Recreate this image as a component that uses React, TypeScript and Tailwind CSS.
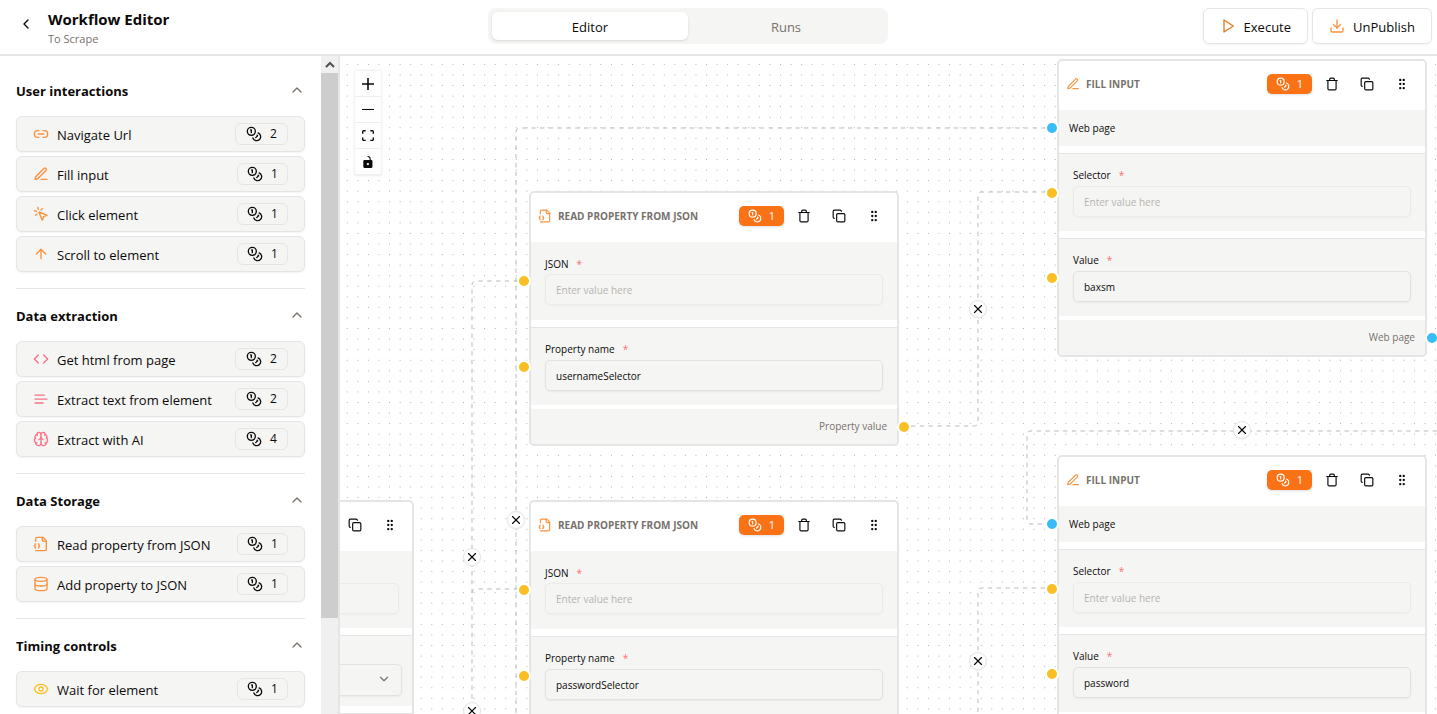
import type { ReactNode } from "react";
import {
  ArrowUp,
  Brain,
  ChevronDown,
  ChevronLeft,
  ChevronUp,
  Code,
  Copy,
  Database,
  Download,
  Eye,
  GripVertical,
  Link2,
  MousePointerClick,
  X,
} from "lucide-react";

type IconProps = { className?: string };

function Stroke({ className, children }: IconProps & { children: ReactNode }) {
  return (
    <svg
      viewBox="0 0 24 24"
      fill="none"
      stroke="currentColor"
      strokeWidth="2"
      strokeLinecap="round"
      strokeLinejoin="round"
      className={className}
      aria-hidden="true"
    >
      {children}
    </svg>
  );
}

const Coins = ({ className }: IconProps) => (
  <Stroke className={className}>
    <circle cx="8" cy="8" r="6" />
    <path d="M18.09 10.37A6 6 0 1 1 10.34 18" />
    <path d="M7 6h1v4" />
    <path d="m16.71 13.88.7.71-2.82 2.82" />
  </Stroke>
);

const Pen = ({ className }: IconProps) => (
  <Stroke className={className}>
    <path d="M12 20h9" />
    <path d="M16.376 3.622a1 1 0 0 1 3.002 3.002L7.368 18.635a2 2 0 0 1-.855.506l-2.872.838a.5.5 0 0 1-.62-.62l.838-2.872a2 2 0 0 1 .506-.854z" />
  </Stroke>
);

const FileJson = ({ className }: IconProps) => (
  <Stroke className={className}>
    <path d="M4 22h14a2 2 0 0 0 2-2V7l-5-5H6a2 2 0 0 0-2 2v4" />
    <path d="M14 2v4a2 2 0 0 0 2 2h4" />
    <path d="M4 12a1 1 0 0 0-1 1v1a1 1 0 0 1-1 1 1 1 0 0 1 1 1v1a1 1 0 0 0 1 1" />
    <path d="M8 18a1 1 0 0 0 1-1v-1a1 1 0 0 1 1-1 1 1 0 0 1-1-1v-1a1 1 0 0 0-1-1" />
  </Stroke>
);

const TextLines = ({ className }: IconProps) => (
  <Stroke className={className}>
    <path d="M17 6.1H3" />
    <path d="M21 12.1H3" />
    <path d="M15.1 18H3" />
  </Stroke>
);

const Trash = ({ className }: IconProps) => (
  <Stroke className={className}>
    <path d="M3 6h18" />
    <path d="M19 6v14c0 1-1 2-2 2H7c-1 0-2-1-2-2V6" />
    <path d="M8 6V4c0-1 1-2 2-2h4c1 0 2 1 2 2v2" />
  </Stroke>
);

const Play = ({ className }: IconProps) => (
  <Stroke className={className}>
    <polygon points="6 3 20 12 6 21 6 3" />
  </Stroke>
);

type Task = { label: string; cost: number; icon: ReactNode };

const groups: { title: string; tasks: Task[] }[] = [
  {
    title: "User interactions",
    tasks: [
      { label: "Navigate Url", cost: 2, icon: <Link2 className="size-4 text-[#fb923c]" /> },
      { label: "Fill input", cost: 1, icon: <Pen className="size-4 text-[#fb923c]" /> },
      { label: "Click element", cost: 1, icon: <MousePointerClick className="size-4 text-[#fb923c]" /> },
      { label: "Scroll to element", cost: 1, icon: <ArrowUp className="size-4 text-[#fb923c]" /> },
    ],
  },
  {
    title: "Data extraction",
    tasks: [
      { label: "Get html from page", cost: 2, icon: <Code className="size-4 text-[#fb7185]" /> },
      { label: "Extract text from element", cost: 2, icon: <TextLines className="size-4 text-[#fb7185]" /> },
      { label: "Extract with AI", cost: 4, icon: <Brain className="size-4 text-[#fb7185]" /> },
    ],
  },
  {
    title: "Data Storage",
    tasks: [
      { label: "Read property from JSON", cost: 1, icon: <FileJson className="size-4 text-[#fb923c]" /> },
      { label: "Add property to JSON", cost: 1, icon: <Database className="size-4 text-[#fb923c]" /> },
    ],
  },
  {
    title: "Timing controls",
    tasks: [{ label: "Wait for element", cost: 1, icon: <Eye className="size-4 text-[#fbbf24]" /> }],
  },
];

function Header() {
  return (
    <header className="flex h-14 shrink-0 items-center justify-between border-b-2 border-[#e5e5e5] pt-2 pr-[5px] pb-2.5 pl-2">
      <div className="flex items-center gap-1 pr-1">
        <button type="button" aria-label="Back" className="flex size-9 items-center justify-center pb-1">
          <ChevronLeft className="size-4" />
        </button>
        <div className="pt-0.5">
          <h1 className="text-[15px] leading-6 font-bold">Workflow Editor</h1>
          <p className="text-[11px] leading-4 text-[#78716c]">To Scrape</p>
        </div>
      </div>
      <nav className="grid h-9 w-[400px] grid-cols-2 rounded-lg bg-[#f5f5f4] p-1 text-[13px]">
        <a href="#editor" className="flex items-center justify-center rounded-md bg-white pt-[3px] shadow-sm">
          Editor
        </a>
        <a href="#runs" className="flex items-center justify-center rounded-md pt-[3px] text-[#78716c]">
          Runs
        </a>
      </nav>
      <div className="flex gap-1 text-[13px]">
        <button
          type="button"
          className="flex h-9 items-center gap-2 rounded-md border border-[#e7e5e4] bg-white px-4 shadow-xs"
        >
          <Play className="size-4 text-[#e07b1a]" />
          <span className="pt-[3px]">Execute</span>
        </button>
        <button
          type="button"
          className="flex h-9 items-center gap-2 rounded-md border border-[#e7e5e4] bg-white px-4 shadow-xs"
        >
          <Download className="size-4 text-[#fb923c]" />
          <span className="pt-[3px]">UnPublish</span>
        </button>
      </div>
    </header>
  );
}

function Sidebar() {
  return (
    <aside className="flex w-[340px] shrink-0 border-r-2 border-[#e5e5e5]">
      <div className="flex-1 overflow-hidden px-4 pt-2">
        {groups.map((group) => (
          <section key={group.title} className="border-b border-[#e5e5e5] pb-4">
            <h2>
              <button type="button" className="flex h-[52px] w-full items-center justify-between text-[13px] font-bold">
                <span className="pt-[3px]">{group.title}</span>
                <ChevronUp className="size-4 text-[#78716c]" />
              </button>
            </h2>
            <div className="flex flex-col gap-1">
              {group.tasks.map((task) => (
                <button
                  type="button"
                  key={task.label}
                  className="flex h-9 items-center justify-between rounded-md border border-[#e5e5e5] bg-[#f5f5f4] px-4 text-[13px] shadow-xs"
                >
                  <span className="flex items-center gap-2">
                    {task.icon}
                    <span className="pt-[3px]">{task.label}</span>
                  </span>
                  <span
                    className={
                      task.cost === 1
                        ? "flex h-[22px] w-[51px] items-center justify-center gap-2 rounded-md border border-[#e5e5e5] text-xs font-medium"
                        : "flex h-[22px] w-[53px] items-center justify-center gap-2 rounded-md border border-[#e5e5e5] text-xs font-medium"
                    }
                  >
                    <Coins className="size-4" />
                    {task.cost}
                  </span>
                </button>
              ))}
            </div>
          </section>
        ))}
      </div>
      <div className="flex w-[17px] flex-col bg-[#f0f0f0]" aria-hidden="true">
        <div className="flex h-[17px] items-center justify-center">
          <svg viewBox="0 0 10 7" className="h-[7px] w-2.5">
            <path d="M1 6 5 2 9 6" fill="none" stroke="#505050" strokeWidth="2" />
          </svg>
        </div>
        <div className="h-[545px] bg-[#cdcdcd]" />
      </div>
    </aside>
  );
}

function Handle({ color, side }: { color: "amber" | "sky"; side: "left" | "right" }) {
  const fill = color === "amber" ? "bg-[#fbbf24]" : "bg-[#38bdf8]";
  const place = side === "left" ? "-left-3.5" : "-right-3.5";
  return (
    <span
      className={`absolute top-1/2 size-3.5 -translate-y-1/2 rounded-full border-2 border-white ${fill} ${place}`}
    />
  );
}

function NodeActions({ bare = false }: { bare?: boolean }) {
  return (
    <div className="flex items-center gap-1.5">
      {!bare && (
        <span className="flex h-5 w-[45px] items-center justify-center gap-[7px] rounded-[5px] bg-[#f97316] text-[11px] font-medium text-white shadow-sm">
          <Coins className="size-3.5" />1
        </span>
      )}
      <div className="flex gap-[7px]">
        {!bare && (
          <button type="button" aria-label="Delete" className="flex size-7 items-center justify-center">
            <Trash className="size-3.5" />
          </button>
        )}
        <button type="button" aria-label="Duplicate" className="flex size-7 items-center justify-center">
          <Copy className="size-3.5" />
        </button>
        <button type="button" aria-label="Move" className="flex size-7 items-center justify-center">
          <GripVertical className="size-3.5" />
        </button>
      </div>
    </div>
  );
}

function Field({
  id,
  label,
  value,
  first = false,
}: {
  id: string;
  label: string;
  value?: string;
  first?: boolean;
}) {
  return (
    <div
      className={
        first
          ? "relative flex min-h-[78px] flex-col gap-0.5 bg-[#f5f5f4] px-3.5 pt-3.5"
          : "relative flex min-h-[78px] flex-col gap-[3px] border-t border-[#e5e5e5] bg-[#f5f5f4] px-3.5 pt-[13px]"
      }
    >
      <Handle color="amber" side="left" />
      <label htmlFor={id} className="flex h-4 items-center gap-2 text-[10px]">
        {label}
        <span className="text-[#f87171]">*</span>
      </label>
      <input
        id={id}
        type="text"
        defaultValue={value}
        disabled={value === undefined}
        placeholder="Enter value here"
        className="block h-[31px] w-full rounded-[5px] border border-[#e2e2e1] px-2.5 text-[10px] shadow-xs placeholder:text-[#78716c] disabled:opacity-50"
      />
    </div>
  );
}

function NodeCard({
  place,
  icon,
  title,
  children,
}: {
  place: string;
  icon: ReactNode;
  title: string;
  children: ReactNode;
}) {
  return (
    <article className={`absolute w-[370px] rounded-[5px] border-2 border-[#e5e5e5] bg-white ${place}`}>
      <div className="flex h-[49px] items-center justify-between pr-[9px] pb-[3px] pl-[7px]">
        <h3 className="flex items-center gap-1.5 text-[10px] font-bold text-[#78716c]">
          {icon}
          {title}
        </h3>
        <NodeActions />
      </div>
      {children}
    </article>
  );
}

function Output({ label, color }: { label?: string; color: "amber" | "sky" }) {
  return (
    <div className="relative mt-1 flex h-[35px] items-center justify-end rounded-b-[3px] bg-[#f5f5f4] px-2.5 text-[10px] text-[#78716c]">
      {label}
      <Handle color={color} side="right" />
    </div>
  );
}

type NodeProps = { id: string; place: string; value: string; output?: string };

function ReadJsonNode({ id, place, value, output }: NodeProps) {
  return (
    <NodeCard
      place={place}
      icon={<FileJson className="size-3.5 text-[#fb923c]" />}
      title="READ PROPERTY FROM JSON"
    >
      <div className="flex flex-col gap-[7px]">
        <Field id={`${id}-json`} label="JSON" first />
        <Field id={`${id}-name`} label="Property name" value={value} />
      </div>
      <Output label={output} color="amber" />
    </NodeCard>
  );
}

function FillInputNode({ id, place, value, output }: NodeProps) {
  return (
    <NodeCard place={place} icon={<Pen className="size-3.5 text-[#fb923c]" />} title="FILL INPUT">
      <div className="flex flex-col gap-[7px]">
        <div className="relative flex h-9 items-center bg-[#f5f5f4] px-2.5 text-[10px]">
          <Handle color="sky" side="left" />
          Web page
        </div>
        <Field id={`${id}-selector`} label="Selector" />
        <Field id={`${id}-value`} label="Value" value={value} />
      </div>
      <Output label={output} color="sky" />
    </NodeCard>
  );
}

function PartialNode() {
  return (
    <article className="absolute top-[444px] left-[-296px] w-[370px] rounded-[5px] border-2 border-[#e5e5e5] bg-white">
      <div className="flex h-[49px] items-center justify-end pr-2 pb-[3px]">
        <NodeActions bare />
      </div>
      <div className="flex flex-col gap-[7px]">
        <div className="min-h-[77px] bg-[#f5f5f4] px-[13px] pt-8">
          <input
            type="text"
            disabled
            aria-label="Value"
            className="block h-[31px] w-full rounded-[5px] border border-[#e2e2e1] shadow-xs disabled:opacity-50"
          />
        </div>
        <div className="min-h-[71px] border-t border-[#e5e5e5] bg-[#f5f5f4] px-2.5 pt-7">
          <div className="relative">
            <select
              aria-label="Option"
              className="block h-8 w-full appearance-none rounded-[5px] border border-[#e2e2e1] shadow-xs"
            />
            <ChevronDown className="pointer-events-none absolute top-2 right-[11px] size-3.5 text-[#78716c]" />
          </div>
        </div>
        <div className="h-12 border-t border-[#e5e5e5] bg-[#f5f5f4]" />
      </div>
    </article>
  );
}

function Edges() {
  const paths = [
    "M706 72H180Q176 72 176 76V658",
    "M178 225H136Q132 225 132 229V658",
    "M178 533H136Q132 533 132 537",
    "M571 370H634Q638 370 638 366V140Q638 136 642 136H705",
    "M1097 375H691Q687 375 687 379V464Q687 468 691 468H705",
    "M705 532H642Q638 532 638 536V658",
  ];
  return (
    <svg className="absolute inset-0 size-full" aria-hidden="true">
      <defs>
        <pattern id="dots" x="2" y="3.1" width="10.566" height="10.566" patternUnits="userSpaceOnUse">
          <circle cx="5.28" cy="5.28" r="0.5" fill="#91919a" />
        </pattern>
      </defs>
      <rect width="100%" height="100%" fill="url(#dots)" />
      <g fill="none" stroke="#b1b1b7" strokeWidth="0.88" strokeDasharray="4.4">
        {paths.map((d) => (
          <path key={d} d={d} />
        ))}
      </g>
    </svg>
  );
}

function EdgeButton({ place }: { place: string }) {
  return (
    <button
      type="button"
      aria-label="Remove connection"
      className={`absolute flex size-[18px] items-center justify-center rounded-full border border-[#e5e5e5] bg-white shadow-xs ${place}`}
    >
      <X className="size-3.5 shrink-0" />
    </button>
  );
}

const controls = [
  {
    name: "Zoom in",
    box: "0 0 32 32",
    d: "M32 18.133H18.133V32h-4.266V18.133H0v-4.266h13.867V0h4.266v13.867H32z",
  },
  { name: "Zoom out", box: "0 0 32 5", d: "M0 0h32v4.2H0z" },
  {
    name: "Fit view",
    box: "0 0 32 30",
    d: "M3.692 4.63c0-.53.4-.938.939-.938h5.215V0H4.708C2.13 0 0 2.054 0 4.63v5.216h3.692V4.631zM27.354 0h-5.2v3.692h5.17c.53 0 .984.4.984.939v5.215H32V4.631A4.624 4.624 0 0027.354 0zm.954 24.83c0 .532-.4.94-.939.94h-5.215v3.768h5.215c2.577 0 4.631-2.13 4.631-4.707v-5.139h-3.692v5.139zm-23.677.94c-.531 0-.939-.4-.939-.94v-5.138H0v5.139c0 2.577 2.13 4.707 4.708 4.707h5.138V25.77H4.631z",
  },
  {
    name: "Toggle lock",
    box: "0 0 25 32",
    d: "M21.333 10.667H19.81V7.619C19.81 3.429 16.38 0 12.19 0c-4.114 1.828-1.37 2.133.305 2.438 1.676.305 4.42 2.59 4.42 5.181v3.048H3.047A3.056 3.056 0 000 13.714v15.238A3.056 3.056 0 003.048 32h18.285a3.056 3.056 0 003.048-3.048V13.714a3.056 3.056 0 00-3.048-3.047zM12.19 24.533a3.056 3.056 0 01-3.047-3.047 3.056 3.056 0 013.047-3.048 3.056 3.056 0 013.048 3.048 3.056 3.056 0 01-3.048 3.047z",
  },
];

function Canvas() {
  return (
    <main className="relative flex-1 overflow-hidden">
      <Edges />
      <PartialNode />
      <ReadJsonNode
        id="username"
        place="top-[135px] left-[189px]"
        value="usernameSelector"
        output="Property value"
      />
      <ReadJsonNode id="password" place="top-[444px] left-[189px]" value="passwordSelector" />
      <FillInputNode id="login" place="top-[3px] left-[717px]" value="baxsm" output="Web page" />
      <FillInputNode id="secret" place="top-[399px] left-[717px]" value="password" />
      <EdgeButton place="top-[455px] left-[167px]" />
      <EdgeButton place="top-[492px] left-[123px]" />
      <EdgeButton place="top-[646px] left-[123px]" />
      <EdgeButton place="top-[244px] left-[629px]" />
      <EdgeButton place="top-[596px] left-[629px]" />
      <EdgeButton place="top-[365px] left-[893px]" />
      <div className="absolute top-[15px] left-[15px] flex flex-col shadow-[0_0_2px_1px_rgba(0,0,0,0.08)]">
        {controls.map((control) => (
          <button
            type="button"
            key={control.name}
            aria-label={control.name}
            className="flex size-[26px] items-center justify-center border-b border-[#eeeeee] bg-[#fefefe]"
          >
            <svg viewBox={control.box} className="max-h-3 w-full max-w-3" fill="currentColor" aria-hidden="true">
              <path d={control.d} />
            </svg>
          </button>
        ))}
      </div>
    </main>
  );
}

export default function App() {
  return (
    <div className="flex h-screen flex-col overflow-hidden bg-white font-['Open_Sans','Noto_Sans',sans-serif] text-[#0c0a09]">
      <Header />
      <div className="flex min-h-0 flex-1">
        <Sidebar />
        <Canvas />
      </div>
    </div>
  );
}
